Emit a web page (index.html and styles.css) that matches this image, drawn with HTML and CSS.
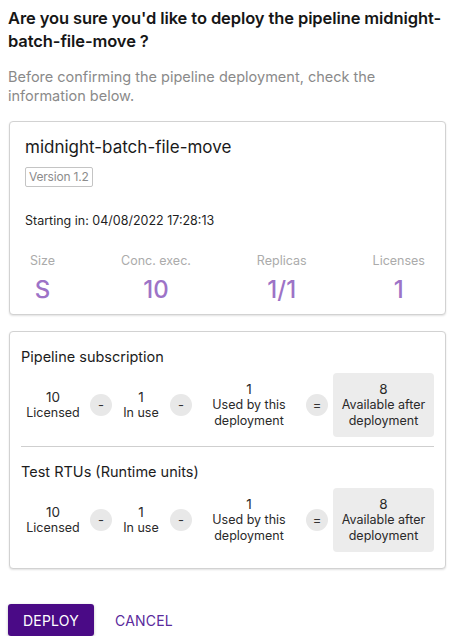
FILE: index.html
```html
<!DOCTYPE html>
<html>
<head>
<meta charset="utf-8">
<link rel="stylesheet" href="styles.css">
</head>
<body>
<div class="dialog">
  <h1 class="title">Are you sure you'd like to deploy the pipeline midnight-batch-file-move ?</h1>
  <p class="subtitle">Before confirming the pipeline deployment, check the information below.</p>

  <section class="card card-pipeline">
    <h2 class="pipe-name">midnight-batch-file-move</h2>
    <span class="version">Version 1.2</span>
    <p class="starting">Starting in: 04/08/2022 17:28:13</p>
    <div class="stats">
      <div class="stat"><div class="stat-label">Size</div><div class="stat-value">S</div></div>
      <div class="stat"><div class="stat-label">Conc. exec.</div><div class="stat-value">10</div></div>
      <div class="stat"><div class="stat-label">Replicas</div><div class="stat-value">1/1</div></div>
      <div class="stat"><div class="stat-label">Licenses</div><div class="stat-value">1</div></div>
    </div>
  </section>

  <section class="card card-usage">
    <div class="usage">
      <h3 class="usage-title">Pipeline subscription</h3>
      <div class="calc">
        <div class="term"><div>10</div><div>Licensed</div></div>
        <div class="op">-</div>
        <div class="term"><div>1</div><div>In use</div></div>
        <div class="op">-</div>
        <div class="term"><div>1</div><div>Used by this deployment</div></div>
        <div class="op">=</div>
        <div class="term result"><div>8</div><div>Available after deployment</div></div>
      </div>
    </div>
    <div class="usage usage-second">
      <h3 class="usage-title">Test RTUs (Runtime units)</h3>
      <div class="calc">
        <div class="term"><div>10</div><div>Licensed</div></div>
        <div class="op">-</div>
        <div class="term"><div>1</div><div>In use</div></div>
        <div class="op">-</div>
        <div class="term"><div>1</div><div>Used by this deployment</div></div>
        <div class="op">=</div>
        <div class="term result"><div>8</div><div>Available after deployment</div></div>
      </div>
    </div>
  </section>

  <div class="actions">
    <button class="btn btn-primary">DEPLOY</button>
    <button class="btn btn-text">CANCEL</button>
  </div>
</div>
</body>
</html>
```

FILE: styles.css
```css
* { box-sizing: border-box; }
html, body { margin: 0; padding: 0; background: #fff; }
body {
  font-family: "Inter", "DejaVu Sans", sans-serif;
  color: #1c1c1c;
}
.dialog { padding: 7px 8px 0 8px; }
.title {
  margin: 0;
  font-size: 16.5px;
  font-weight: 600;
  letter-spacing: -0.1px;
  line-height: 23px;
  color: #161616;
}
.subtitle {
  margin: 14px 0 0 0;
  font-size: 14.5px;
  line-height: 19px;
  color: #8a8a8a;
  font-weight: 400;
}
.card {
  margin: 0 4px 0 1px;
  border: 1px solid #d2d2d2;
  border-radius: 4px;
  box-shadow: 0 1px 2px rgba(0,0,0,0.12);
  background: #fff;
}
.card-pipeline {
  margin-top: 16px;
  height: 194px;
  padding: 14px 15px 0 15px;
}
.pipe-name {
  margin: 0;
  font-size: 17px;
  font-weight: 400;
  line-height: 22px;
  color: #1a1a1a;
}
.version {
  display: inline-block;
  margin-top: 9px;
  height: 20px;
  padding: 0 3px;
  border: 1px solid #c4c4c4;
  border-radius: 2px;
  font-size: 12px;
  letter-spacing: -0.2px;
  line-height: 18px;
  color: #8c8c8c;
}
.starting {
  margin: 26px 0 0 0;
  font-size: 12.5px;
  line-height: 16px;
  color: #1f1f1f;
}
.stats {
  display: flex;
  justify-content: space-between;
  margin-top: 24px;
  padding: 0 5px;
}
.stat { text-align: center; }
.stat-label {
  font-size: 12.5px;
  line-height: 16px;
  color: #ababab;
}
.stat-value {
  margin-top: 6px;
  font-size: 24px;
  line-height: 30px;
  color: #9d73c7;
  font-weight: 500;
}
.card-usage {
  margin-top: 16px;
  padding: 0 11px 16px 11px;
}
.usage { padding-top: 15px; }
.usage-second {
  border-top: 1px solid #cfcfcf;
  margin-top: 9px;
  padding-top: 15px;
}
.usage-title {
  margin: 0;
  font-size: 14.5px;
  font-weight: 400;
  line-height: 20px;
  color: #1c1c1c;
}
.calc {
  display: grid;
  grid-template-columns: 64px 22px 48px 22px 104px 22px 1fr;
  column-gap: 5px;
  align-items: center;
  margin-top: 6px;
}
.term {
  text-align: center;
  font-size: 12.5px;
  line-height: 16px;
  color: #2a2a2a;
}
.term div:first-child { font-size: 13.5px; }
.result {
  background: #ececec;
  border-radius: 4px;
  padding: 8px 0;
}
.op {
  width: 22px;
  height: 22px;
  border-radius: 50%;
  background: #e8e8e8;
  font-size: 13px;
  line-height: 22px;
  text-align: center;
  color: #333;
}
.actions {
  display: flex;
  align-items: center;
  gap: 21px;
  margin-top: 35px;
}
.btn {
  font-family: "Inter", "DejaVu Sans", sans-serif;
  font-size: 14px;
  border: 0;
  cursor: pointer;
  letter-spacing: 0.2px;
}
.btn-primary {
  width: 86px;
  height: 32px;
  background: #4a0a86;
  color: #fff;
  border-radius: 3px;
  box-shadow: 0 1px 3px rgba(0,0,0,0.25);
}
.btn-text {
  background: transparent;
  color: #5a2a9c;
  padding: 0;
}
```
